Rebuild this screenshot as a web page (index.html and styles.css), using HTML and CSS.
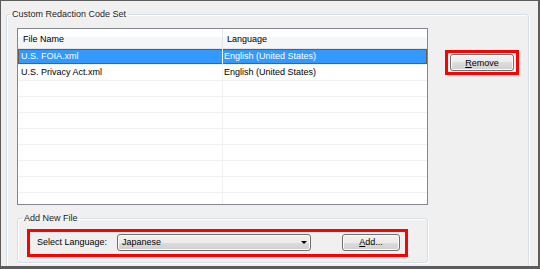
FILE: index.html
```html
<!DOCTYPE html>
<html lang="en">
<head>
  <meta charset="UTF-8">
  <title>Custom Redaction Code Set</title>
  <link rel="stylesheet" href="styles.css">
</head>
<body>

  <div class="window">
    <fieldset class="group main-group">
      <legend>Custom Redaction Code Set</legend>

      <div class="top-row">
        <!-- File list -->
        <div class="list">
          <div class="list-head">
            <div class="col col-name">File Name</div>
            <div class="col col-lang">Language</div>
          </div>
          <div class="list-row selected">
            <div class="col col-name">U.S. FOIA.xml</div>
            <div class="col col-lang">English (United States)</div>
          </div>
          <div class="list-row">
            <div class="col col-name">U.S. Privacy Act.xml</div>
            <div class="col col-lang">English (United States)</div>
          </div>
          <div class="list-row"><div class="col col-name"></div><div class="col col-lang"></div></div>
          <div class="list-row"><div class="col col-name"></div><div class="col col-lang"></div></div>
          <div class="list-row"><div class="col col-name"></div><div class="col col-lang"></div></div>
          <div class="list-row"><div class="col col-name"></div><div class="col col-lang"></div></div>
          <div class="list-row"><div class="col col-name"></div><div class="col col-lang"></div></div>
          <div class="list-row"><div class="col col-name"></div><div class="col col-lang"></div></div>
          <div class="list-row"><div class="col col-name"></div><div class="col col-lang"></div></div>
          <div class="list-row"><div class="col col-name"></div><div class="col col-lang"></div></div>
        </div>

        <div class="side">
          <div class="highlight remove-box">
            <button class="btn btn-remove"><u>R</u>emove</button>
          </div>
        </div>
      </div>

      <!-- Add new file -->
      <fieldset class="group add-group">
        <legend>Add New File</legend>
        <div class="highlight add-box">
          <span class="field-label">Select Language:</span>
          <div class="combo">
            <span>Japanese</span>
            <span class="combo-arrow"></span>
          </div>
          <button class="btn btn-add"><u>A</u>dd...</button>
        </div>
      </fieldset>
    </fieldset>
  </div>

</body>
</html>
```

FILE: styles.css
```css
* { box-sizing: border-box; }
body { margin: 0; font-family: "Liberation Sans", Arial, sans-serif; font-size: 9px; color: #000; }

.window { width: 540px; height: 269px; overflow: hidden; background: #f0f0f0; border-style: solid; border-color: #5c5c5c; border-width: 1px 2px 3px 1px; padding: 7px 0 0 5px; }

.group { margin: 0; min-width: 0; border: 1px solid #d5dfe5; border-radius: 3px; box-shadow: inset 1px 1px 0 #fff, 1px 1px 0 #fff; }
.group legend { padding: 0 2px; line-height: 12px; color: #222; }
.main-group { width: 523px; height: 300px; padding: 8px 0 0 10px; }
.main-group > legend { margin-left: -7px; }

.top-row { display: flex; align-items: flex-start; }

.list { width: 411px; height: 177px; border: 1px solid #828790; background: #fff; overflow: hidden; }
.list-head { display: flex; height: 20px; border-bottom: 1px solid #e5e5e5; background: linear-gradient(#fff, #fff 40%, #f5f6f7 41%, #f5f6f7); }
.list-head .col { display: flex; align-items: center; padding-left: 5px; }
.list-head .col-lang { padding-left: 4px; }
.list-head .col-name { border-right-color: #e5e5e5; }
.col-name { width: 205px; border-right: 1px solid #f0f0f0; }
.col-lang { flex: 1; }
.list-row { display: flex; height: 16px; border-bottom: 1px solid #f0f0f0; }
.list-row .col { line-height: 15px; padding-left: 3px; white-space: nowrap; }
.list-row .col-lang { padding-left: 1px; }
.selected { background: #3399ff; color: #fff; box-shadow: inset 0 0 0 1px #6a5b4f; }

.side { margin: 22px 0 0 17px; }
.highlight { border: 3px solid #ff0000; }
.remove-box { padding: 1px 2px; }

.btn { display: block; padding: 0; font: inherit; color: #000; border: 1px solid #707070; border-radius: 3px; background: linear-gradient(#f2f2f2, #ebebeb 50%, #dddddd 50%, #cfcfcf); box-shadow: inset 0 0 0 1px #fbfbfb; }
.btn-remove { width: 64px; height: 17px; }
.btn-add { width: 58px; height: 17px; margin-left: 31px; }

.add-group { width: 411px; height: 51px; margin-top: 7px; padding: 5px 0 0 9px; }
.add-group > legend { margin-left: -5px; }
.add-box { width: 381px; height: 28px; display: flex; align-items: center; padding: 1px 0 3px 7px; }
.field-label { width: 80px; }
.combo { width: 194px; height: 17px; display: flex; align-items: center; justify-content: space-between; padding: 0 3px 0 4px; border: 1px solid #707070; border-radius: 3px; background: linear-gradient(#f2f2f2, #ebebeb 50%, #dddddd 50%, #cfcfcf); box-shadow: inset 0 0 0 1px #fbfbfb; }
.combo-arrow { width: 0; height: 0; border-left: 3px solid transparent; border-right: 3px solid transparent; border-top: 3px solid #000; }
```
